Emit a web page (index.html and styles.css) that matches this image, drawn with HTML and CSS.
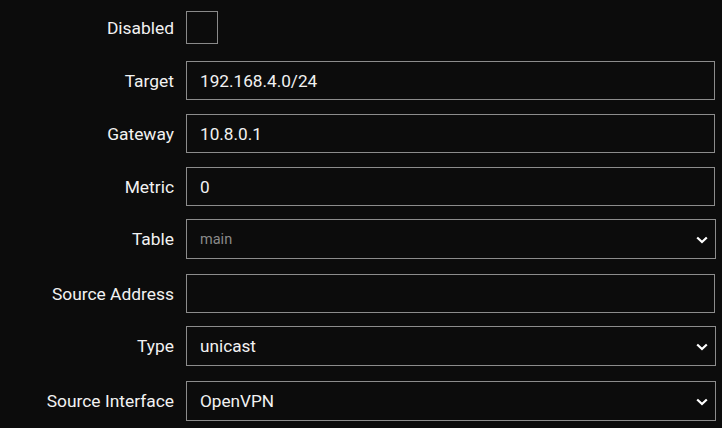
FILE: index.html
```html
<!DOCTYPE html>
<html lang="en">
<head>
<meta charset="utf-8">
<title>Route</title>
<link rel="stylesheet" href="styles.css">
</head>
<body>
<form class="form">
  <div class="row row-check">
    <label class="label" for="disabled">Disabled</label>
    <div class="control"><input id="disabled" class="checkbox" type="checkbox"></div>
  </div>
  <div class="row">
    <label class="label" for="target">Target</label>
    <div class="control"><input id="target" class="input" type="text" value="192.168.4.0/24"></div>
  </div>
  <div class="row">
    <label class="label" for="gateway">Gateway</label>
    <div class="control"><input id="gateway" class="input" type="text" value="10.8.0.1"></div>
  </div>
  <div class="row">
    <label class="label" for="metric">Metric</label>
    <div class="control"><input id="metric" class="input" type="text" value="0"></div>
  </div>
  <div class="row row-tight">
    <label class="label" for="table">Table</label>
    <div class="control select-wrap">
      <select id="table" class="select select-muted"><option>main</option></select>
      <svg class="chevron" viewBox="0 0 12 8" width="12" height="8"><path d="M1.2 1.5 L6 6 L10.8 1.5" fill="none" stroke="#fff" stroke-width="2.2"/></svg>
    </div>
  </div>
  <div class="row">
    <label class="label" for="srcaddr">Source Address</label>
    <div class="control"><input id="srcaddr" class="input" type="text" value=""></div>
  </div>
  <div class="row row-tight">
    <label class="label" for="type">Type</label>
    <div class="control select-wrap">
      <select id="type" class="select"><option>unicast</option></select>
      <svg class="chevron" viewBox="0 0 12 8" width="12" height="8"><path d="M1.2 1.5 L6 6 L10.8 1.5" fill="none" stroke="#fff" stroke-width="2.2"/></svg>
    </div>
  </div>
  <div class="row">
    <label class="label" for="srcif">Source Interface</label>
    <div class="control select-wrap">
      <select id="srcif" class="select"><option>OpenVPN</option></select>
      <svg class="chevron" viewBox="0 0 12 8" width="12" height="8"><path d="M1.2 1.5 L6 6 L10.8 1.5" fill="none" stroke="#fff" stroke-width="2.2"/></svg>
    </div>
  </div>
</form>
</body>
</html>
```

FILE: styles.css
```css
html, body {
  margin: 0;
  padding: 0;
  background: #0c0c0c;
  color: #f2f2f2;
  font-family: Roboto, "Liberation Sans", sans-serif;
  font-size: 17px;
}

.form {
  display: flex;
  flex-direction: column;
  gap: 14px;
  padding-top: 11px;
}

.row {
  display: grid;
  grid-template-columns: 174px 530px;
  column-gap: 12px;
  align-items: center;
}

.row-check {
  margin-bottom: 3px;
}

.row-tight {
  margin-top: -1px;
  margin-bottom: 1px;
}

.label {
  text-align: right;
  color: #f2f2f2;
  font-size: 17.4px;
}

.control {
  display: flex;
}

.checkbox {
  appearance: none;
  -webkit-appearance: none;
  margin: 0;
  width: 32px;
  height: 33px;
  border: 1px solid #8a8a8a;
  background: #0c0c0c;
  box-sizing: border-box;
}

.input {
  box-sizing: border-box;
  width: 529px;
  height: 39px;
  margin: 0;
  padding: 0 13px;
  border: 1px solid #8c8c8c;
  background: #0c0c0c;
  color: #f2f2f2;
  font-family: Roboto, "Liberation Sans", sans-serif;
  font-size: 17.2px;
  outline: none;
}

.select-wrap {
  position: relative;
}

.select {
  appearance: none;
  -webkit-appearance: none;
  box-sizing: border-box;
  width: 530px;
  height: 40px;
  margin: 0;
  padding: 0 30px 0 13px;
  border: 1px solid #8c8c8c;
  border-radius: 0;
  background: #0c0c0c;
  color: #f2f2f2;
  font-family: Roboto, "Liberation Sans", sans-serif;
  font-size: 17.2px;
  outline: none;
}

.select-muted {
  color: #8a8a8a;
  font-size: 14.5px;
}

.chevron {
  position: absolute;
  right: 8px;
  top: 17px;
  pointer-events: none;
}
```
